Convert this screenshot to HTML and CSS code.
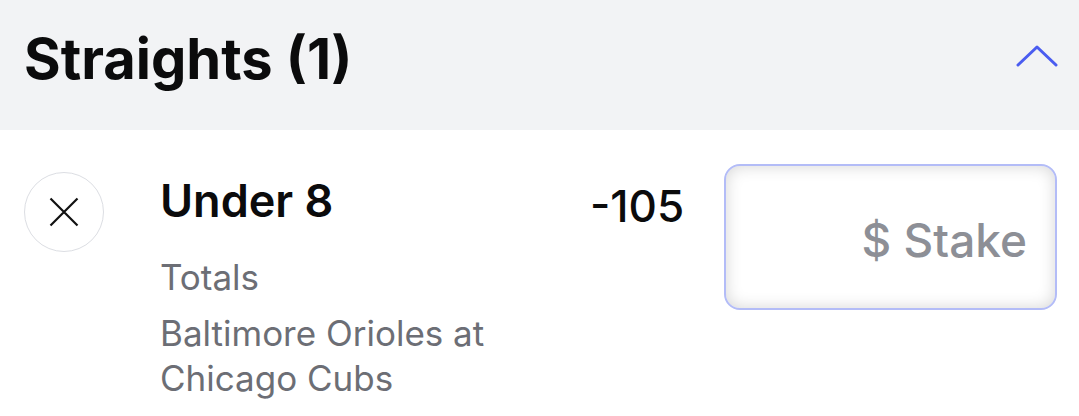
FILE: index.html
```html
<!DOCTYPE html>
<html>
<head>
<meta charset="utf-8">
<link rel="stylesheet" href="styles.css">
</head>
<body>
<div class="section-header">
  <h2 class="section-title">Straights (1)</h2>
  <button class="collapse-btn" aria-label="Collapse">
    <svg width="42" height="24" viewBox="0 0 42 24"><path d="M2 21 L21 3 L40 21" fill="none" stroke="#4a5cf0" stroke-width="3" stroke-linecap="round" stroke-linejoin="round"/></svg>
  </button>
</div>
<div class="bet-row">
  <button class="remove-btn" aria-label="Remove">
    <svg width="30" height="30" viewBox="0 0 30 30"><path d="M1.5 1.5 L28.5 28.5 M28.5 1.5 L1.5 28.5" fill="none" stroke="#111" stroke-width="2.2"/></svg>
  </button>
  <div class="bet-info">
    <div class="bet-name">Under 8</div>
    <div class="bet-market">Totals</div>
    <div class="bet-event">Baltimore Orioles at Chicago Cubs</div>
  </div>
  <div class="bet-odds">-105</div>
  <div class="stake-box"><span class="stake-placeholder">$ Stake</span></div>
</div>
</body>
</html>
```
FILE: styles.css
```css
* { box-sizing: border-box; }
body {
  margin: 0;
  background: #fff;
  font-family: Inter, "Noto Sans", sans-serif;
  color: #0b0b0c;
}
.section-header {
  height: 130px;
  background: #f2f3f5;
  display: flex;
  align-items: center;
  justify-content: space-between;
  padding: 0 21px 0 24px;
}
.section-title {
  margin: 0;
  font-size: 56px;
  font-weight: 700;
  letter-spacing: 0;
  line-height: 1;
  padding-bottom: 12px;
}
.collapse-btn {
  border: 0;
  background: none;
  padding: 0;
  display: flex;
  margin-bottom: 18px;
}
.bet-row {
  display: flex;
  align-items: flex-start;
  padding: 34px 22px 0 24px;
}
.remove-btn {
  width: 80px;
  height: 80px;
  border-radius: 50%;
  border: 1.5px solid #dcdee3;
  background: #fff;
  display: flex;
  align-items: center;
  justify-content: center;
  padding: 0;
  margin-top: 8px;
  flex: none;
}
.bet-info {
  width: 400px;
  margin-left: 56px;
}
.bet-name {
  font-size: 45px;
  font-weight: 600;
  line-height: 56px;
  margin-top: 9px;
}
.bet-market, .bet-event {
  font-size: 35px;
  color: #6c6e75;
  line-height: 45px;
}
.bet-market { margin-top: 26px; }
.bet-event { margin-top: 11px; }
.bet-odds {
  margin-left: 30px;
  font-size: 44px;
  font-weight: 500;
  line-height: 56px;
  margin-top: 14px;
}
.stake-box {
  margin-left: auto;
  width: 333px;
  height: 146px;
  border: 2px solid #b3bcf7;
  border-radius: 16px;
  box-shadow: inset 0 0 16px rgba(0, 0, 0, 0.17);
  display: flex;
  align-items: center;
  justify-content: flex-end;
  padding: 6px 28px 0 0;
}
.stake-placeholder {
  font-size: 46px;
  font-weight: 500;
  color: #8d8f96;
}
```
